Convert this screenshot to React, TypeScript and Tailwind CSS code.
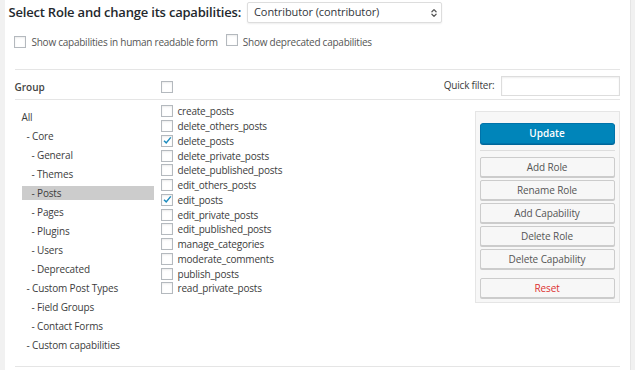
import { ChevronsUpDown } from 'lucide-react';

const groups = [
  { label: 'All', indent: 0 },
  { label: '- Core', indent: 1 },
  { label: '- General', indent: 2 },
  { label: '- Themes', indent: 2 },
  { label: '- Posts', indent: 2, active: true },
  { label: '- Pages', indent: 2 },
  { label: '- Plugins', indent: 2 },
  { label: '- Users', indent: 2 },
  { label: '- Deprecated', indent: 2 },
  { label: '- Custom Post Types', indent: 1 },
  { label: '- Field Groups', indent: 2 },
  { label: '- Contact Forms', indent: 2 },
  { label: '- Custom capabilities', indent: 1 },
];

const caps = [
  { name: 'create_posts', on: false },
  { name: 'delete_others_posts', on: false },
  { name: 'delete_posts', on: true },
  { name: 'delete_private_posts', on: false },
  { name: 'delete_published_posts', on: false },
  { name: 'edit_others_posts', on: false },
  { name: 'edit_posts', on: true },
  { name: 'edit_private_posts', on: false },
  { name: 'edit_published_posts', on: false },
  { name: 'manage_categories', on: false },
  { name: 'moderate_comments', on: false },
  { name: 'publish_posts', on: false },
  { name: 'read_private_posts', on: false },
];

function Box({ checked = false }: { checked?: boolean }) {
  return (
    <span className="relative inline-block w-[12px] h-[12px] shrink-0 border border-[#b4b9be] bg-white shadow-[inset_0_1px_2px_rgba(0,0,0,0.08)]">
      {checked && (
        <svg viewBox="0 0 12 12" className="absolute left-[0px] top-[-1px] w-[11px] h-[11px]">
          <path d="M2.2 6.2 L4.6 8.6 L9.6 2.6" fill="none" stroke="#1e8cbe" strokeWidth="1.6" />
        </svg>
      )}
    </span>
  );
}

function Btn({ label, red = false }: { label: string; red?: boolean }) {
  return (
    <button
      className={`h-[20px] w-full border border-[#cccccc] bg-[#f7f7f7] rounded-[2px] shadow-[0_1px_0_#cccccc] text-[10px] tracking-[-0.1px] leading-none ${
        red ? 'text-[#dc3232]' : 'text-[#555555]'
      }`}
    >
      {label}
    </button>
  );
}

export default function App() {
  return (
    <div className="flex w-[635px] h-[370px] overflow-hidden bg-white text-[#3c3c3c] font-['Open_Sans','Liberation_Sans',sans-serif]">
      <div className="w-[5px] bg-[#f1f1f1]" />
      <div className="flex-1 flex flex-col">
        <div className="flex items-center h-[24px] pt-[1px] pl-[4px]">
          <span className="text-[13px] font-semibold text-[#23282d] tracking-[-0.2px]">
            Select Role and change its capabilities:
          </span>
          <div className="ml-[6px] flex items-center justify-between w-[195px] h-[21px] border border-[#dddddd] rounded-[2px] bg-white shadow-[0_1px_2px_rgba(0,0,0,0.07)] pl-[6px] pr-[2px] text-[11px] tracking-[-0.1px] text-[#32373c]">
            <span>Contributor (contributor)</span>
            <ChevronsUpDown className="w-[10px] h-[10px] text-[#555]" strokeWidth={3} />
          </div>
        </div>

        <div className="flex items-center h-[26px] mt-[5px] pl-[9px] text-[10px] tracking-[-0.25px] text-[#555555]">
          <Box />
          <span className="ml-[6px]">Show capabilities in human readable form</span>
          <span className="ml-[8px]"><Box /></span>
          <span className="ml-[5px]">Show deprecated capabilities</span>
        </div>

        <div className="mx-[10px] mt-[14px] w-[605px] flex-1 flex flex-col">
          <div className="border-t border-[#e5e5e5] h-[31px] pt-[5px] flex items-center border-b">
            <span className="w-[146px] text-[10px] font-semibold text-[#444]">Group</span>
            <Box />
            <div className="ml-auto flex items-center mt-[-3px]">
              <span className="text-[10px] tracking-[-0.2px] mr-[6px]">Quick filter:</span>
              <span className="block w-[119px] h-[20px] border border-[#dddddd] bg-white shadow-[inset_0_1px_2px_rgba(0,0,0,0.07)]" />
            </div>
          </div>

          <div className="flex flex-1 border-b border-[#e5e5e5]">
            <div className="w-[139px] pt-[10px] pl-[7px] text-[10px] tracking-[-0.15px]">
              {groups.map((g) => (
                <div
                  key={g.label}
                  className={`h-[14px] leading-[14px] mb-[5px] ${g.active ? 'bg-[#cccccc]' : ''} ${
                    g.indent === 0 ? 'pl-0' : g.indent === 1 ? 'pl-[5px]' : 'pl-[10px]'
                  }`}
                >
                  {g.label}
                </div>
              ))}
            </div>

            <div className="w-[310px] pl-[7px] pt-[4px] text-[10px] tracking-[-0.2px]">
              {caps.map((c) => (
                <div key={c.name} className="flex items-center h-[14.75px]">
                  <Box checked={c.on} />
                  <span className="ml-[5px] leading-none">{c.name}</span>
                </div>
              ))}
            </div>

            <div className="ml-auto mt-[11px] w-[145px] h-[192px] bg-[#f7f7f7] border border-[#e5e5e5] px-[4px] pt-[7px]">
              <button className="h-[21px] w-full bg-[#0085ba] border border-[#0073aa] rounded-[3px] text-white text-[10px] font-semibold shadow-[0_1px_0_#006799]">
                Update
              </button>
              <div className="border-t border-[#dddddd] mt-[6px] mb-[6px]" />
              <div className="flex flex-col gap-[3px]">
                <Btn label="Add Role" />
                <Btn label="Rename Role" />
                <Btn label="Add Capability" />
                <Btn label="Delete Role" />
                <Btn label="Delete Capability" />
              </div>
              <div className="mt-[5px]">
                <Btn label="Reset" red />
              </div>
            </div>
          </div>
          <div className="h-[3px]" />
        </div>
      </div>
      <div className="w-[6px] bg-[#f1f1f1] border-l border-[#e5e5e5]" />
    </div>
  );
}
